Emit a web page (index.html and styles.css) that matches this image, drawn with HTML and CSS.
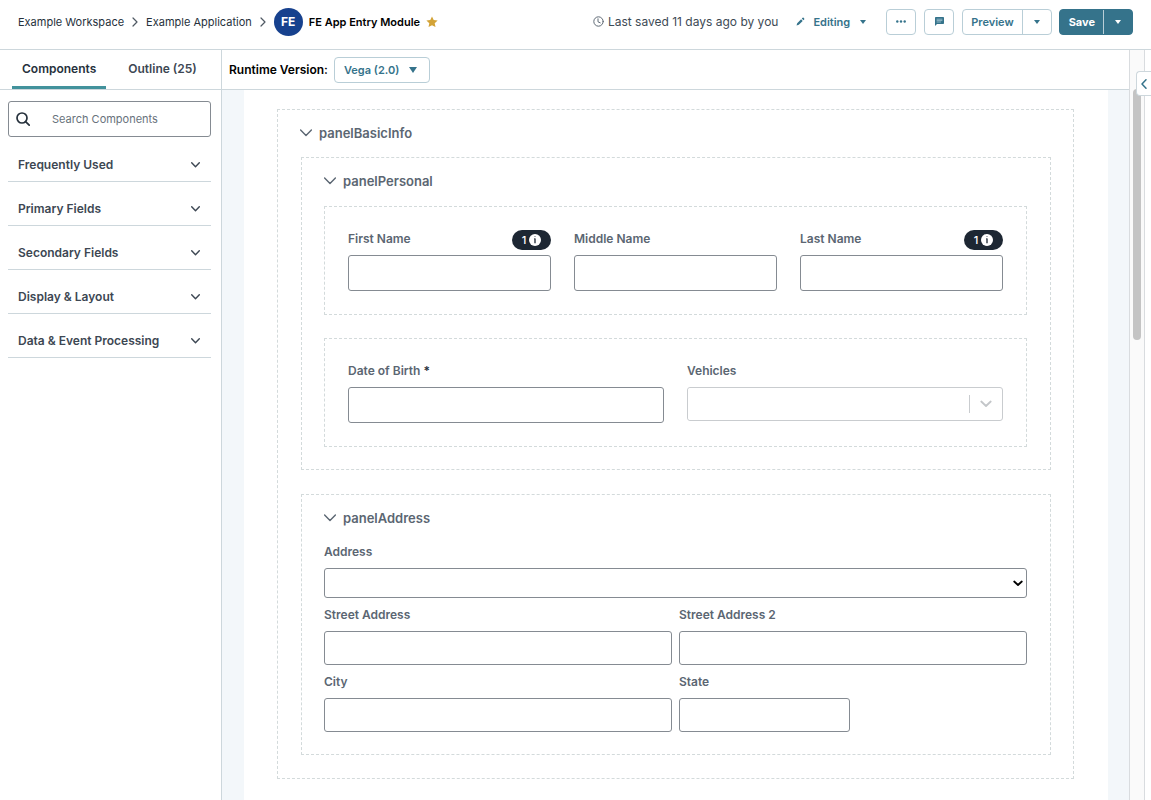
FILE: index.html
```html
<!DOCTYPE html>
<html lang="en">
<head>
<meta charset="utf-8">
<title>FE App Entry Module</title>
<link rel="stylesheet" href="styles.css">
</head>
<body>
<div class="app">
  <header class="topbar">
    <nav class="crumbs" aria-label="Breadcrumb">
      <a href="#">Example Workspace</a>
      <svg class="crumb-sep" viewBox="0 0 6 10"><path d="M1 1l4 4-4 4"/></svg>
      <a href="#">Example Application</a>
      <svg class="crumb-sep" viewBox="0 0 6 10"><path d="M1 1l4 4-4 4"/></svg>
      <span class="avatar">FE</span>
      <span class="module">FE App Entry Module</span>
      <svg class="star" viewBox="0 0 12 12"><path d="M6 .4l1.7 3.6 3.9.5-2.9 2.7.8 3.9L6 9.2l-3.5 1.9.8-3.9L.4 4.500l3.900-.5z"/></svg>
    </nav>
    <div class="actions">
      <span class="saved">
        <svg class="clock" viewBox="0 0 11 11"><circle cx="5.500" cy="5.500" r="4.700"/><path d="M5 2.800v3l2.200 1"/></svg>
        Last saved 11 days ago by you
      </span>
      <button class="mode" type="button">
        <svg class="pencil" viewBox="0 0 9 9"><path d="M.5 8.500l.7-2.300 3.900-3.900 1.600 1.600L2.800 7.800zM5.800 1.600l.8-.8q.5-.4 1 0l.6.6q.4.500 0 1l-.8.800z"/></svg>
        Editing
        <svg class="caret" viewBox="0 0 6 4"><path d="M0 0h6L3 4z"/></svg>
      </button>
      <button class="icon-btn" type="button" aria-label="More">
        <svg class="dots" viewBox="0 0 10 3"><circle cx="1.300" cy="1.500" r="1.200"/><circle cx="5" cy="1.500" r="1.200"/><circle cx="8.700" cy="1.500" r="1.200"/></svg>
      </button>
      <button class="icon-btn" type="button" aria-label="Comments">
        <svg class="comment" viewBox="0 0 9 9"><path class="bubble" d="M.8 0h7.400q.8 0 .8.800v5.400q0 .8-.8.800H2L0 9V.8Q0 0 .8 0z"/><path class="lines" d="M2 2.200h5M2 3.600h5M2 5h3.500"/></svg>
      </button>
      <div class="split preview">
        <button class="split-main" type="button">Preview</button>
        <button class="split-more" type="button" aria-label="Preview options"><svg class="caret" viewBox="0 0 6 4"><path d="M0 0h6L3 4z"/></svg></button>
      </div>
      <div class="split save">
        <button class="split-main" type="button">Save</button>
        <button class="split-more" type="button" aria-label="Save options"><svg class="caret" viewBox="0 0 6 4"><path d="M0 0h6L3 4z"/></svg></button>
      </div>
    </div>
  </header>

  <div class="body">
    <aside class="sidebar">
      <div class="tabs" role="tablist">
        <button class="tab active" type="button" role="tab" aria-selected="true">Components</button>
        <button class="tab" type="button" role="tab" aria-selected="false">Outline (25)</button>
      </div>
      <label class="search">
        <svg class="search-icon" viewBox="0 0 14 14"><circle cx="6" cy="6" r="5"/><path d="M9.600 9.600l3.600 3.600"/></svg>
        <input type="search" placeholder="Search Components" aria-label="Search Components">
      </label>
      <div class="groups">
        <button class="group" type="button">Frequently Used <svg class="chev" viewBox="0 0 9 6"><path d="M.7.800l3.800 4 3.800-4"/></svg></button>
        <button class="group" type="button">Primary Fields <svg class="chev" viewBox="0 0 9 6"><path d="M.7.800l3.800 4 3.800-4"/></svg></button>
        <button class="group" type="button">Secondary Fields <svg class="chev" viewBox="0 0 9 6"><path d="M.7.800l3.800 4 3.800-4"/></svg></button>
        <button class="group" type="button">Display &amp; Layout <svg class="chev" viewBox="0 0 9 6"><path d="M.7.800l3.800 4 3.800-4"/></svg></button>
        <button class="group" type="button">Data &amp; Event Processing <svg class="chev" viewBox="0 0 9 6"><path d="M.7.800l3.800 4 3.800-4"/></svg></button>
      </div>
    </aside>

    <main class="stage">
      <div class="runtime">
        <span id="runtime-label">Runtime Version:</span>
        <button class="version" type="button" aria-describedby="runtime-label">Vega (2.0) <svg class="caret-lg" viewBox="0 0 8 6"><path d="M0 0h8L4 6z"/></svg></button>
      </div>
      <div class="canvas">
        <div class="sheet">
          <section class="panel root">
            <h2 class="panel-title root-title"><svg class="fold" viewBox="0 0 12 8"><path d="M.6 1L6 6.500 11.400 1"/></svg>panelBasicInfo</h2>
            <section class="panel nested">
              <h3 class="panel-title"><svg class="fold" viewBox="0 0 12 8"><path d="M.6 1L6 6.500 11.400 1"/></svg>panelPersonal</h3>
              <div class="rows">
                <div class="panel row three">
                  <div class="field">
                    <div class="field-head"><label for="first">First Name</label><span class="badge">1<svg class="info" viewBox="0 0 12 12"><circle cx="6" cy="6" r="6"/><path d="M5.200 4.800H6v4.400M6 2.400v.5"/></svg></span></div>
                    <input id="first" type="text">
                  </div>
                  <div class="field">
                    <div class="field-head"><label for="middle">Middle Name</label></div>
                    <input id="middle" type="text">
                  </div>
                  <div class="field">
                    <div class="field-head"><label for="last">Last Name</label><span class="badge">1<svg class="info" viewBox="0 0 12 12"><circle cx="6" cy="6" r="6"/><path d="M5.200 4.800H6v4.400M6 2.400v.5"/></svg></span></div>
                    <input id="last" type="text">
                  </div>
                </div>
                <div class="panel row two">
                  <div class="field">
                    <div class="field-head"><label for="dob">Date of Birth <span class="required">*</span></label></div>
                    <input id="dob" type="text">
                  </div>
                  <div class="field">
                    <div class="field-head"><label for="vehicles">Vehicles</label></div>
                    <div class="combo">
                      <input id="vehicles" type="text" role="combobox" aria-expanded="false">
                      <button class="combo-toggle" type="button" aria-label="Show vehicles"><svg viewBox="0 0 12 8"><path d="M1.300 1.500L6 6l4.700-4.500"/></svg></button>
                    </div>
                  </div>
                </div>
              </div>
            </section>
            <section class="panel nested">
              <h3 class="panel-title"><svg class="fold" viewBox="0 0 12 8"><path d="M.6 1L6 6.500 11.400 1"/></svg>panelAddress</h3>
              <div class="address">
                <div class="compact full">
                  <label for="address">Address</label>
                  <div class="select-wrap">
                    <select id="address"><option></option></select>
                    <svg class="select-arrow" viewBox="0 0 10 7"><path d="M1.200 1.500L5 5l3.800-3.500"/></svg>
                  </div>
                </div>
                <div class="compact half"><label for="street">Street Address</label><input id="street" type="text"></div>
                <div class="compact half"><label for="street2">Street Address 2</label><input id="street2" type="text"></div>
                <div class="compact half"><label for="city">City</label><input id="city" type="text"></div>
                <div class="compact"><label for="state">State</label><input id="state" type="text"></div>
              </div>
            </section>
          </section>
        </div>
      </div>
    </main>

    <div class="scroll-track"><div class="scroll-thumb"></div></div>
    <button class="drawer-toggle" type="button" aria-label="Open panel"><svg viewBox="0 0 6 10"><path d="M5 .8L1 5l4 4.200"/></svg></button>
  </div>
</div>
</body>
</html>
```
FILE: styles.css
```css
* { box-sizing: border-box; }

:root {
  --teal: #35738b;
  --line: #cdd7dc;
  --slate: #5b6672;
  --ink: #3d4753;
  --field: #858b92;
}

body {
  margin: 0;
  font: 12px/18px Inter, "Liberation Sans", sans-serif;
  color: #26313c;
  background: #fff;
}

button, input, select { font: inherit; color: inherit; margin: 0; }
button { background: none; border: 0; padding: 0; cursor: pointer; white-space: nowrap; }
svg { display: block; flex: none; fill: none; stroke-linecap: round; stroke-linejoin: round; }

.app { display: flex; flex-direction: column; height: 100vh; }

/* Top bar */
.topbar {
  display: flex;
  align-items: center;
  justify-content: space-between;
  height: 50px;
  padding: 0 18px 6px;
  border-bottom: 1px solid var(--line);
  flex: none;
  white-space: nowrap;
}
.crumbs, .actions, .saved, .mode { display: flex; align-items: center; }
.crumbs { font-size: 11px; }
.crumbs a { color: #26313c; text-decoration: none; }
.crumb-sep { width: 6px; height: 10px; margin: 0 8px; stroke: #4f5963; stroke-width: 1.2; }
.avatar {
  width: 29px;
  height: 28px;
  border-radius: 50%;
  background: #17418e;
  color: #fff;
  font: 700 12px/28px Inter, sans-serif;
  text-align: center;
}
.module { margin-left: 6px; font-weight: 600; color: #000; }
.star { width: 12px; height: 12px; margin-left: 6px; fill: #d3a337; }

.saved { gap: 4px; color: #3d4a55; }
.clock { width: 11px; height: 11px; stroke: #5f6a75; stroke-width: 1; }
.mode { gap: 8px; margin: 0 20px 0 18px; color: var(--teal); font-weight: 600; font-size: 11px; }
.pencil { width: 9px; height: 9px; fill: var(--teal); }
.caret { width: 6px; height: 4px; fill: currentColor; }
.mode .caret { margin-left: 2px; }
.icon-btn {
  display: grid;
  place-items: center;
  width: 30px;
  height: 26px;
  margin-right: 8px;
  border: 1px solid #b9ced7;
  border-radius: 4px;
}
.dots { width: 10px; height: 3px; fill: var(--teal); }
.comment { width: 9px; height: 9px; }
.bubble { fill: var(--teal); }
.lines { stroke: #b7d3de; stroke-width: 0.7; }
.split { display: flex; height: 26px; border: 1px solid #b9ced7; border-radius: 4px; font-weight: 600; font-size: 11px; overflow: hidden; }
.preview { margin-right: 7px; color: var(--teal); }
.save { background: var(--teal); border-color: var(--teal); color: #fff; font-weight: 700; }
.split-main { padding: 0 8px; }
.save .split-main { padding-left: 9px; }
.split-more { display: grid; place-items: center; width: 29px; border-left: 1px solid #b9ced7; }

/* Body columns */
.body { display: flex; flex: 1; min-height: 0; position: relative; }

.sidebar { display: flex; flex-direction: column; width: 222px; flex: none; border-right: 1px solid var(--line); }
.tabs { display: flex; gap: 12px; height: 40px; padding: 0 12px; border-bottom: 1px solid var(--line); }
.tab { padding: 2px 10px 0; border-bottom: 3px solid transparent; border-radius: 2px 2px 0 0; font-weight: 600; color: var(--ink); }
.tab.active { border-bottom-color: #42929c; color: #26313c; }
.search {
  display: flex;
  align-items: center;
  gap: 22px;
  height: 36px;
  margin: 11px 10px 0 8px;
  padding: 0 7px;
  border: 1px solid var(--field);
  border-radius: 3px;
}
.search-icon { width: 14px; height: 14px; stroke: #26313c; stroke-width: 1.7; }
.search input { flex: 1; min-width: 0; padding: 0; border: 0; outline: 0; background: none; font-size: 11px; }
.search input::placeholder { color: #68727c; opacity: 1; }
.groups { margin: 1px 10px 0 8px; }
.group {
  display: flex;
  align-items: center;
  justify-content: space-between;
  width: 100%;
  height: 44px;
  padding: 10px 11px 0 10px;
  border-bottom: 1px solid var(--line);
  font-weight: 600;
  color: var(--ink);
}
.chev { width: 9px; height: 6px; stroke: var(--ink); stroke-width: 1.4; }

/* Stage */
.stage { display: flex; flex-direction: column; flex: 1; min-width: 0; }
.runtime {
  display: flex;
  align-items: center;
  gap: 6px;
  height: 40px;
  padding-left: 7px;
  border-bottom: 1px solid var(--line);
  flex: none;
  color: #000;
  font-weight: 600;
}
.version {
  display: flex;
  align-items: center;
  gap: 10px;
  height: 26px;
  padding: 0 12px 0 9px;
  border: 1px solid #b9ced7;
  border-radius: 4px;
  color: var(--teal);
  font-weight: 600;
  font-size: 11px;
}
.caret-lg { width: 8px; height: 6px; fill: currentColor; }
.canvas { flex: 1; min-height: 0; overflow-y: auto; scrollbar-width: none; padding: 0 21px 0 22px; background: #f3f7fa; }
.sheet { min-height: 100%; padding: 19px 34px 33px 33px; background: #fff; }

.panel { border: 1px dashed #d3dadb; }
.root { padding: 0 22px 23px 23px; }
.nested { padding: 0 23px 22px 22px; }
.nested + .nested { margin-top: 24px; }
.panel-title {
  display: flex;
  align-items: center;
  gap: 7px;
  height: 48px;
  margin: 0;
  padding-bottom: 2px;
  font-size: 13px;
  font-weight: 600;
  color: var(--slate);
}
.root-title { height: 47px; margin-left: -1px; }
.fold { width: 12px; height: 8px; stroke: var(--slate); stroke-width: 1.4; }

.rows { display: grid; gap: 23px; }
.row { display: grid; gap: 23px; padding: 23px; }
.three { grid-template-columns: repeat(3, minmax(0, 1fr)); }
.two { grid-template-columns: repeat(2, minmax(0, 1fr)); }
.field-head { display: flex; justify-content: space-between; height: 25px; }
label { color: var(--slate); font-weight: 600; }
.search { font-weight: 400; }
.required { color: #26313c; }
.field input, .compact input, .compact select {
  display: block;
  width: 100%;
  padding: 0 8px;
  border: 1px solid var(--field);
  border-radius: 3px;
  background: #fff;
}
.field input { height: 36px; }
.badge {
  display: flex;
  align-items: center;
  justify-content: center;
  gap: 3px;
  width: 39px;
  height: 20px;
  border-radius: 10px;
  background: #1d2733;
  color: #fff;
  font-weight: 500;
  font-size: 11px;
}
.info { width: 12px; height: 12px; }
.info circle { fill: #fff; }
.info path { stroke: #1d2733; stroke-width: 1.3; stroke-linecap: butt; }

.combo { display: flex; align-items: center; height: 34px; border: 1px solid #c9cccf; border-radius: 3px; }
.combo input { flex: 1; min-width: 0; height: 100%; border: 0; }
.combo-toggle { display: grid; place-items: center; width: 33px; height: 18px; border-left: 1px solid #c9cccf; }
.combo-toggle svg { width: 12px; height: 8px; stroke: #c3c6c9; stroke-width: 1.8; }

.address { display: grid; grid-template-columns: repeat(4, minmax(0, 1fr)); gap: 8px 7px; }
.compact { display: grid; gap: 7px; }
.half { grid-column: span 2; }
.full { grid-column: 1 / -1; }
.compact input { height: 34px; }
.select-wrap { position: relative; }
.compact select { appearance: none; height: 30px; }
.select-arrow { position: absolute; right: 4px; top: 12px; width: 10px; height: 7px; stroke: #000; stroke-width: 1.8; pointer-events: none; }

/* Right gutter */
.scroll-track { width: 16px; flex: none; margin-right: 6px; padding: 39px 3px 0; border: solid #d9dcdf; border-width: 0 1px 0 1px; background: #fafafa; }
.scroll-thumb { width: 8px; height: 251px; border-radius: 4px; background: #c4c4c4; }
.drawer-toggle {
  position: absolute;
  top: 21px;
  right: 0;
  display: grid;
  place-items: center;
  width: 15px;
  height: 25px;
  border: 1px solid var(--line);
  border-right: 0;
  border-radius: 4px 0 0 4px;
  background: #fff;
}
.drawer-toggle svg { width: 6px; height: 10px; stroke: var(--teal); stroke-width: 1.5; }
```
